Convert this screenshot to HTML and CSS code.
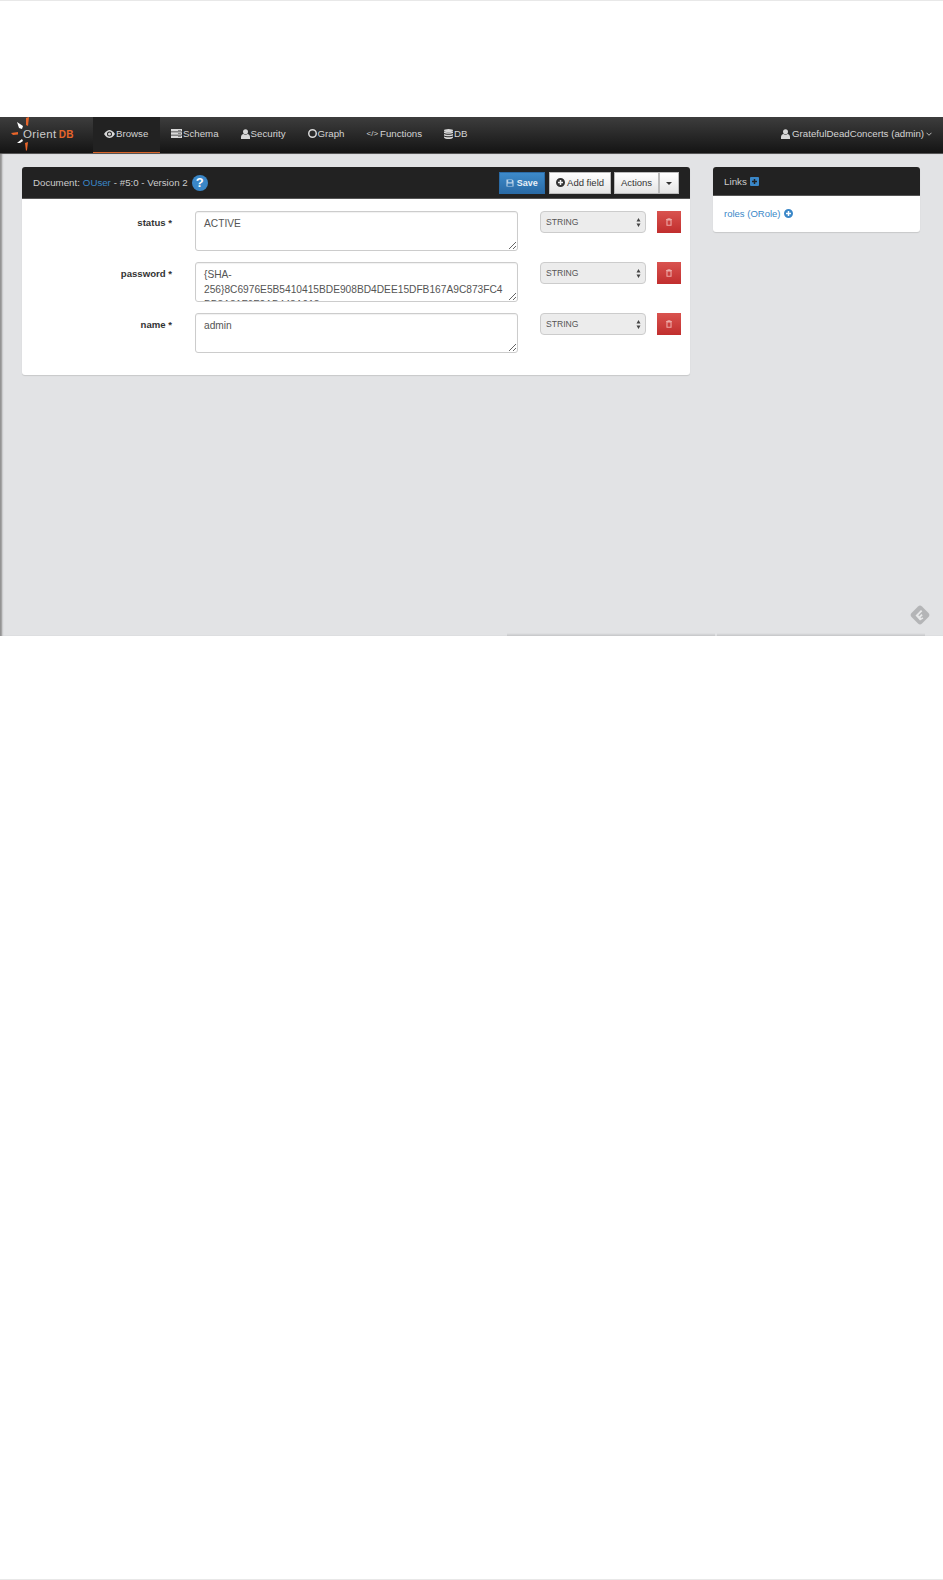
FILE: index.html
```html
<!DOCTYPE html>
<html lang="en">
<head>
    <meta charset="UTF-8">
    <title>OrientDB Studio</title>
    <link rel="stylesheet" href="styles.css">
</head>
<body>
    <div class="app">
        <nav class="navbar">
            <a class="brand">
                <svg class="brand-burst" width="24" height="34" viewBox="0 0 24 34">
                    <path d="M15 0 L18 -1 L17 8 L15 7 Z" fill="#e8652a"/>
                    <path d="M6 4 L12 8 L11 11 L8 10 Z" fill="#fff"/>
                    <path d="M0 15 L7 14 L7 16.500 L2 17 Z" fill="#e8652a"/>
                    <path d="M6 25 L11 21 L12 23 L9 25 Z" fill="#fff"/>
                    <path d="M14 25 L17 24 L16 32 L15 33 Z" fill="#e8652a"/>
                </svg>
                <span class="brand-name">Orient<b>DB</b></span>
            </a>
            <ul class="nav-list">
                <li class="nav-item active">
                    <svg class="ico" width="11" height="8" viewBox="0 0 22 16"><path fill-rule="evenodd" d="M0 8C4 2 8 0 11 0s7 2 11 8c-4 6-8 8-11 8S4 14 0 8zm11-5a5 5 0 1 0 0 10 5 5 0 0 0 0-10zm0 2a3 3 0 1 1-3 3 3 3 0 0 1 3-3z" fill="#d8d8d8"/></svg>
                    Browse
                </li>
                <li class="nav-item">
                    <svg class="ico" width="11" height="9" viewBox="0 0 22 18"><path d="M0 0h22v5H0zM0 6.500h22v5H0zM0 13h22v5H0z" fill="#d8d8d8"/><path d="M14 2h6v1h-6zM14 8.500h6v1h-6zM14 15h6v1h-6z" fill="#333"/></svg>
                    Schema
                </li>
                <li class="nav-item">
                    <svg class="ico" width="9" height="10" viewBox="0 0 18 20"><circle cx="9" cy="5.500" r="5" fill="#d8d8d8"/><path d="M0 20v-4c0-4 3-6 5-6 1 1 2.500 1.500 4 1.500s3-.5 4-1.500c2 0 5 2 5 6v4z" fill="#d8d8d8"/></svg>
                    Security
                </li>
                <li class="nav-item">
                    <svg class="ico" width="9" height="9" viewBox="0 0 18 18"><circle cx="9" cy="9" r="7.500" fill="none" stroke="#d8d8d8" stroke-width="3"/></svg>
                    Graph
                </li>
                <li class="nav-item">
                    <span class="code-ico">&lt;/&gt;</span>
                    Functions
                </li>
                <li class="nav-item">
                    <svg class="ico" width="9" height="10" viewBox="0 0 18 20"><ellipse cx="9" cy="3" rx="9" ry="3" fill="#d8d8d8"/><path d="M0 5c2 2 16 2 18 0v3c-2 2-16 2-18 0zM0 10c2 2 16 2 18 0v3c-2 2-16 2-18 0zM0 15c2 2 16 2 18 0v2c-2 4-16 4-18 0z" fill="#d8d8d8"/></svg>
                    DB
                </li>
            </ul>
            <div class="nav-user">
                <svg class="ico" width="9" height="10" viewBox="0 0 18 20"><circle cx="9" cy="5.500" r="5" fill="#d8d8d8"/><path d="M0 20v-4c0-4 3-6 5-6 1 1 2.500 1.500 4 1.500s3-.5 4-1.500c2 0 5 2 5 6v4z" fill="#d8d8d8"/></svg>
                GratefulDeadConcerts (admin)
                <svg class="user-chevron" width="6" height="4" viewBox="0 0 12 8"><path d="M1 1.500l5 5 5-5" fill="none" stroke="#ccc" stroke-width="1.800"/></svg>
            </div>
        </nav>

        <main class="content">
            <section class="panel document">
                <header class="panel-head doc-head">
                    <div class="doc-title">
                        Document: <a class="link">OUser</a> - #5:0 - Version 2
                        <span class="help">?</span>
                    </div>
                    <div class="doc-actions">
                        <button class="btn btn-save">
                            <svg class="ico" width="8" height="8" viewBox="0 0 18 18"><path fill-rule="evenodd" d="M1 1h13l3 3v13H1zM5 2.500v5h8v-5zM3.500 10v5.500h11V10z" fill="#b9d2e8"/></svg>
                            Save
                        </button>
                        <button class="btn btn-add">
                            <svg class="ico" width="9" height="9" viewBox="0 0 18 18"><path fill-rule="evenodd" d="M9 0a9 9 0 1 1 0 18A9 9 0 0 1 9 0zM7.500 4v3.500H4v3h3.500V14h3v-3.500H14v-3h-3.500V4z" fill="#333"/></svg>
                            Add field
                        </button>
                        <div class="btn-group">
                            <button class="btn btn-actions">Actions</button>
                            <button class="btn btn-caret"><span class="caret"></span></button>
                        </div>
                    </div>
                </header>
                <div class="doc-fields">
                    <div class="field-row">
                        <label class="field-label">status *</label>
                        <textarea class="field-input">ACTIVE</textarea>
                        <div class="type-wrap">
                            <select class="type-select"><option>STRING</option></select>
                            <svg class="type-arrows" width="5" height="9" viewBox="0 0 10 18"><path d="M5 0l4 7H1zM5 18l-4-7h8z" fill="#444"/></svg>
                        </div>
                        <button class="btn-delete">
                            <svg width="6" height="8" viewBox="0 0 14 18"><path fill-rule="evenodd" d="M4 0h6l1 2h3v2h-1v14H1V4H0V2h3zM3.500 5.500v10h7v-10z" fill="#eda9a7"/></svg>
                        </button>
                    </div>
                    <div class="field-row">
                        <label class="field-label">password *</label>
                        <textarea class="field-input">{SHA-256}8C6976E5B5410415BDE908BD4DEE15DFB167A9C873FC4BB8A81F6F2AB448A918</textarea>
                        <div class="type-wrap">
                            <select class="type-select"><option>STRING</option></select>
                            <svg class="type-arrows" width="5" height="9" viewBox="0 0 10 18"><path d="M5 0l4 7H1zM5 18l-4-7h8z" fill="#444"/></svg>
                        </div>
                        <button class="btn-delete">
                            <svg width="6" height="8" viewBox="0 0 14 18"><path fill-rule="evenodd" d="M4 0h6l1 2h3v2h-1v14H1V4H0V2h3zM3.500 5.500v10h7v-10z" fill="#eda9a7"/></svg>
                        </button>
                    </div>
                    <div class="field-row">
                        <label class="field-label">name *</label>
                        <textarea class="field-input">admin</textarea>
                        <div class="type-wrap">
                            <select class="type-select"><option>STRING</option></select>
                            <svg class="type-arrows" width="5" height="9" viewBox="0 0 10 18"><path d="M5 0l4 7H1zM5 18l-4-7h8z" fill="#444"/></svg>
                        </div>
                        <button class="btn-delete">
                            <svg width="6" height="8" viewBox="0 0 14 18"><path fill-rule="evenodd" d="M4 0h6l1 2h3v2h-1v14H1V4H0V2h3zM3.500 5.500v10h7v-10z" fill="#eda9a7"/></svg>
                        </button>
                    </div>
                </div>
            </section>

            <aside class="panel links">
                <header class="panel-head links-head">
                    Links
                    <svg class="ico" width="9" height="9" viewBox="0 0 18 18"><path fill-rule="evenodd" d="M2 0h14a2 2 0 0 1 2 2v14a2 2 0 0 1-2 2H2a2 2 0 0 1-2-2V2a2 2 0 0 1 2-2zM7.500 4v3.500H4v3h3.500V14h3v-3.500H14v-3h-3.500V4z" fill="#3a87c8"/></svg>
                </header>
                <div class="links-body">
                    <a class="link">roles (ORole)</a>
                    <svg class="ico" width="9" height="9" viewBox="0 0 18 18"><path fill-rule="evenodd" d="M9 0a9 9 0 1 1 0 18A9 9 0 0 1 9 0zM7.500 4v3.500H4v3h3.500V14h3v-3.500H14v-3h-3.500V4z" fill="#3a87c8"/></svg>
                </div>
            </aside>

            <svg class="feedly" width="20" height="20" viewBox="0 0 20 20">
                <path d="M8 1.500a3 3 0 0 1 4 0l6.500 6.500a3 3 0 0 1 0 4L12 18.500a3 3 0 0 1-4 0L1.500 12a3 3 0 0 1 0-4z" fill="#b4b5b7"/>
                <path d="M5.500 10.500L11 5l1.300 1.300-4 4 .9.9 2.200-2.200 1.300 1.300-2.200 2.200.7.700 1-1 1.200 1.200L10 15.500z" fill="#e8e9ea"/>
            </svg>

            <div class="next-cards">
                <div class="next-card"></div>
                <div class="next-card"></div>
            </div>
        </main>
    </div>
</body>
</html>
```

FILE: styles.css
```css
* {
    box-sizing: border-box;
}

body {
    margin: 0;
    height: 1580px;
    padding-top: 117px;
    font-family: "Liberation Sans", arial, sans-serif;
    font-size: 10px;
    color: #333;
    background: #fff;
    border-top: 1px solid #e8e8e8;
    border-bottom: 1px solid #e8e8e8;
}

.app {
    margin-top: -1px;
}

.ico {
    vertical-align: -1px;
}

/* navbar */
.navbar {
    display: flex;
    align-items: stretch;
    height: 37px;
    color: #d4d4d4;
    background: linear-gradient(#3d3d3d, #141414);
    border-bottom: 1px solid #555;
}

.brand {
    position: relative;
    display: block;
    width: 93px;
}

.brand-burst {
    position: absolute;
    left: 11px;
    top: 1px;
    overflow: visible;
}

.brand-name {
    position: absolute;
    left: 23px;
    top: 11px;
    font-size: 11.500px;
    letter-spacing: .4px;
    color: #ccc;
}

.brand-name b {
    color: #e8652a;
    font-size: 10px;
    margin-left: 2px;
}

.nav-list {
    display: flex;
    margin: 0;
    padding: 0;
    list-style: none;
}

.nav-item {
    display: flex;
    align-items: center;
    gap: 1px;
    padding: 0 11px 3px;
    font-size: 9.700px;
    white-space: nowrap;
}

.nav-item.active {
    min-width: 67px;
    padding-bottom: 2px;
    background: #222;
    border-bottom: 1px solid #d9652a;
}

.code-ico {
    font-size: 8px;
    margin-right: 1px;
}

.nav-user {
    display: flex;
    align-items: center;
    gap: 2px;
    margin-left: auto;
    padding: 0 11px 3px 0;
    font-size: 9.700px;
    white-space: nowrap;
}

/* content */
.content {
    position: relative;
    display: grid;
    grid-template-columns: 668px 207px;
    column-gap: 23px;
    align-items: start;
    height: 482px;
    padding: 13px 0 0 22px;
    background: #e2e3e5;
    box-shadow: inset 3px 0 2px -1px #8f8f8f;
}

.panel {
    background: #fff;
    border-radius: 3px;
    box-shadow: 0 1px 1px rgba(0, 0, 0, .12);
}

.panel-head {
    display: flex;
    align-items: center;
    color: #ccc;
    background: #222;
    border-radius: 3px 3px 0 0;
    border-bottom: 1px solid #555;
}

.link {
    color: #3a87c8;
}

.doc-head {
    justify-content: space-between;
    height: 32px;
    padding: 0 11px 0 11px;
    font-size: 9.700px;
}

.doc-title {
    display: flex;
    align-items: center;
    gap: 3px;
}

.help {
    display: inline-block;
    width: 16px;
    height: 16px;
    margin-left: 1px;
    border-radius: 50%;
    color: #fff;
    background: #3a87c8;
    font-size: 13px;
    font-weight: bold;
    line-height: 16px;
    text-align: center;
}

.doc-actions {
    display: flex;
    gap: 4px;
}

.btn {
    height: 22px;
    padding: 0 8px;
    font-family: inherit;
    font-size: 9.500px;
    color: #333;
    background: linear-gradient(#fff, #e4e4e4);
    border: 1px solid #bbb;
    border-radius: 0;
}

.btn-save {
    width: 46px;
    padding: 0;
    color: #e8f0f7;
    font-size: 9px;
    font-weight: bold;
    background: linear-gradient(#3d8ac9, #2a6ba6);
    border-color: #2a6ba6;
}

.btn-add {
    width: 62px;
    padding: 0;
}

.btn-group {
    display: flex;
    margin-left: -1px;
}

.btn-actions {
    width: 45px;
    padding: 0;
}

.btn-caret {
    width: 20px;
    padding: 0;
    border-left: 0;
    box-shadow: inset 1px 0 0 #bbb;
}

.caret {
    display: inline-block;
    border-top: 3px solid #333;
    border-left: 3px solid transparent;
    border-right: 3px solid transparent;
    vertical-align: middle;
}

/* fields */
.doc-fields {
    display: flex;
    flex-direction: column;
    gap: 11px;
    padding: 12px 0 22px;
}

.field-row {
    display: grid;
    grid-template-columns: 150px 323px 106px 24px;
    align-items: start;
}

.field-label {
    padding-top: 6px;
    font-size: 9.600px;
    font-weight: bold;
    text-align: right;
}

.field-input {
    display: block;
    width: 323px;
    height: 40px;
    margin-left: 23px;
    padding: 4px 8px;
    font-family: inherit;
    font-size: 10.200px;
    line-height: 15px;
    color: #555;
    overflow: hidden;
    resize: both;
    background: #fff;
    border: 1px solid #ccc;
    border-radius: 3px;
    box-shadow: inset 0 1px 1px rgba(0, 0, 0, .06);
}

.type-wrap {
    position: relative;
    width: 106px;
    margin-left: 45px;
}

.type-select {
    display: block;
    width: 106px;
    height: 22px;
    padding: 0 5px 1px;
    font-family: inherit;
    font-size: 8.600px;
    color: #555;
    background: #ececec;
    border: 1px solid #ccc;
    border-radius: 4px;
    appearance: none;
}

.type-arrows {
    position: absolute;
    right: 5px;
    top: 7px;
}

.btn-delete {
    display: flex;
    align-items: center;
    justify-content: center;
    width: 24px;
    height: 22px;
    margin-left: 56px;
    padding: 0;
    background: linear-gradient(#d9534f, #c12e2e);
    border: 0;
}

/* links panel */
.links-head {
    gap: 3px;
    height: 29px;
    padding: 0 11px;
    font-size: 9.800px;
}

.links-body {
    display: flex;
    align-items: center;
    gap: 3px;
    height: 36px;
    padding: 0 11px 1px;
    font-size: 9.500px;
}

/* bottom edge */
.feedly {
    position: absolute;
    right: 13px;
    top: 451px;
}

.next-cards {
    position: absolute;
    left: 507px;
    bottom: 0;
    display: flex;
    gap: 2px;
}

.next-card {
    width: 208px;
    height: 3px;
    background: linear-gradient(#e2e3e5, #c4c5c7);
}
```
